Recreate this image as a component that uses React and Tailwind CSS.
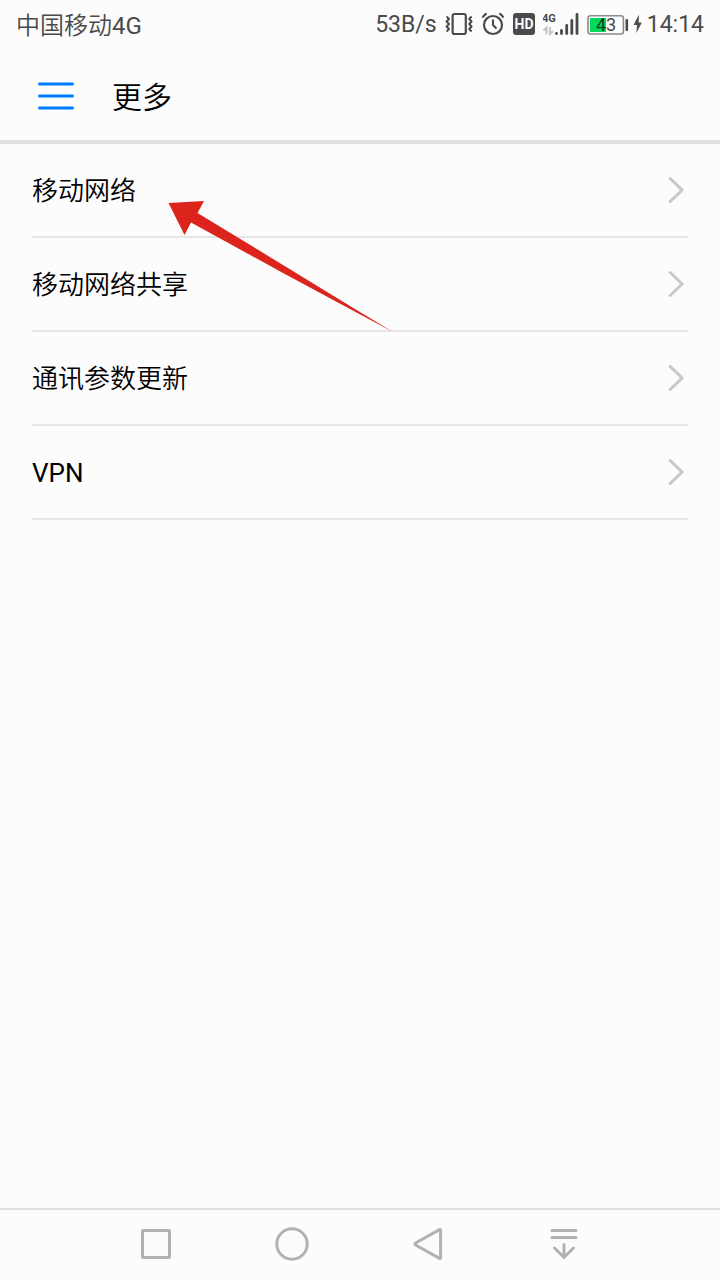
const menuItems = ['移动网络', '移动网络共享', '通讯参数更新', 'VPN'];

const VibrateIcon = () => (
  <svg width="28" height="24" viewBox="0 0 28 24" fill="none" stroke="#4a4a4a" strokeLinejoin="round" aria-hidden="true">
    <rect x="7.6" y="2" width="13.2" height="20" rx="2" strokeWidth="2.2" />
    <path d="M1.6 4.5 L4 7 L1.6 9.5 L4 12 L1.6 14.5 L4 17 L1.6 19.5" strokeWidth="2" />
    <path d="M26.6 4.5 L24.2 7 L26.6 9.5 L24.2 12 L26.6 14.5 L24.2 17 L26.6 19.5" strokeWidth="2" />
  </svg>
);

const AlarmIcon = () => (
  <svg width="24" height="24" viewBox="0 0 24 24" fill="none" stroke="#4a4a4a" strokeWidth="2.2" aria-hidden="true">
    <circle cx="12" cy="13" r="9" />
    <path d="M12 7.5 V13 L15.5 16.5" strokeWidth="2" />
    <path d="M1.6 5.6 Q2.8 3 5.6 1.6" />
    <path d="M22.4 5.6 Q21.2 3 18.4 1.6" />
  </svg>
);

const HdIcon = () => (
  <svg width="22" height="24" viewBox="0 0 22 24" aria-hidden="true">
    <rect x="0" y="1" width="22" height="22" rx="3" fill="#4a4a4a" />
    <text x="11" y="17" textAnchor="middle" fontSize="14" fontWeight="700" fill="#fcfcfc">HD</text>
  </svg>
);

const SignalIcon = () => (
  <svg width="36" height="24" viewBox="0 0 36 24" aria-hidden="true">
    <text x="-1" y="10" fontSize="11" fontWeight="700" fill="#4a4a4a">4G</text>
    <path d="M0.5 18.5 L3.6 15.5 V22.5 M7 15 V22 L10 19" fill="none" stroke="#c4c4c4" strokeWidth="2" />
    <g stroke="#4a4a4a" strokeWidth="2.8" strokeLinecap="round">
      <path d="M13.5 21.4 V21.6" />
      <path d="M18.5 18.4 V21.6" />
      <path d="M23.7 13.4 V21.6" />
      <path d="M28.8 8.4 V21.6" />
      <path d="M34 2.4 V21.6" />
    </g>
  </svg>
);

const BatteryIcon = () => (
  <svg width="42" height="24" viewBox="0 0 42 24" aria-hidden="true">
    <rect x="1" y="3.8" width="35.4" height="18.2" rx="2.5" fill="none" stroke="#8a8a8a" strokeWidth="1.6" />
    <rect x="3" y="6" width="16" height="14" fill="#00d95a" />
    <rect x="38.5" y="7" width="2.6" height="12" rx="1" fill="#4a4a4a" />
    <text y="19" fontSize="18">
      <tspan x="9" fill="#0c3d1d">4</tspan>
      <tspan x="19" fill="#4a4a4a">3</tspan>
    </text>
  </svg>
);

const BoltIcon = () => (
  <svg width="10" height="24" viewBox="0 0 10 24" fill="#4a4a4a" aria-hidden="true">
    <path d="M6 2.5 L0.6 13 H4 L3.4 21 L8.8 10.4 H5.6 Z" />
  </svg>
);

const StatusBar = () => (
  <div className="flex h-12 items-center justify-between px-4 text-[#4a4a4a]">
    <span className="pt-1 text-2xl">中国移动4G</span>
    <div className="flex items-center gap-2 text-[23px]">
      <span className="pt-[2px]">53B/s</span>
      <VibrateIcon />
      <AlarmIcon />
      <HdIcon />
      <SignalIcon />
      <div className="flex items-center gap-1">
        <BatteryIcon />
        <BoltIcon />
        <span className="pt-[2px]">14:14</span>
      </div>
    </div>
  </div>
);

const Header = () => (
  <header className="flex h-24 items-center border-b-4 border-[#e0e0e0] pt-1 pr-4 pl-[38px]">
    <button type="button" aria-label="菜单" className="mr-[38px]">
      <svg width="36" height="30" viewBox="0 0 36 30" stroke="#007dff" strokeWidth="3" strokeLinecap="round">
        <path d="M1.5 3 H34.5 M1.5 15 H34.5 M1.5 27 H34.5" />
      </svg>
    </button>
    <h1 className="pt-[2px] text-[30px]">更多</h1>
  </header>
);

const MenuRow = ({ label }) => (
  <li className="border-b-2 border-[#e6e6e6]">
    <a href="#" className="flex h-[92px] items-center justify-between pr-1">
      <span className="pt-[3px] text-[26px]">{label}</span>
      <svg width="16" height="28" viewBox="0 0 16 28" fill="none" stroke="#c8c8c8" strokeWidth="3" strokeLinecap="round" aria-hidden="true">
        <path d="M2.2 2.5 L14 14 L2.2 25.5" />
      </svg>
    </a>
  </li>
);

const NavBar = () => (
  <nav className="flex h-[72px] justify-center border-t-2 border-[#e0e0e0] pb-[2px]">
    <button type="button" aria-label="最近任务" className="flex w-[136px] items-center justify-center">
      <svg width="36" height="36" viewBox="0 0 36 36" fill="none" stroke="#b2b2b2" strokeWidth="3" strokeLinejoin="round">
        <rect x="4.5" y="4.5" width="27" height="27" rx="0.5" />
      </svg>
    </button>
    <button type="button" aria-label="主页" className="flex w-[136px] items-center justify-center">
      <svg width="36" height="36" viewBox="0 0 36 36" fill="none" stroke="#b2b2b2" strokeWidth="3">
        <circle cx="18" cy="18" r="15.2" />
      </svg>
    </button>
    <button type="button" aria-label="返回" className="flex w-[136px] items-center justify-center">
      <svg width="36" height="36" viewBox="0 0 36 36" fill="none" stroke="#b2b2b2" strokeWidth="3" strokeLinejoin="round">
        <path d="M29.5 3.6 Q30.6 3 30.6 4.6 V31.4 Q30.6 33 29.5 32.4 L5.6 19 Q4.4 18 5.6 17 Z" />
      </svg>
    </button>
    <button type="button" aria-label="下拉通知" className="flex w-[136px] items-center justify-center">
      <svg width="36" height="36" viewBox="0 0 36 36" fill="none" stroke="#b2b2b2" strokeWidth="3" strokeLinecap="round">
        <path d="M6 4.5 H30 M6 11.5 H30" />
        <path d="M18 18.5 V31 M8.5 22 L18 31.5 L27.5 22" />
      </svg>
    </button>
  </nav>
);

const App = () => (
  <div className="flex min-h-screen flex-col bg-[#fcfcfc] font-['Roboto','Noto_Sans_CJK_SC_DemiLight','Noto_Sans_CJK_SC',sans-serif] text-black">
    <StatusBar />
    <Header />
    <main className="relative flex-1 px-8">
      <ul>
        {menuItems.map((label) => (
          <MenuRow key={label} label={label} />
        ))}
      </ul>
      {/* Pointer to the first entry */}
      <svg
        className="pointer-events-none absolute top-14 left-[168px]"
        width="226"
        height="134"
        viewBox="0 0 226 134"
        fill="#dc241c"
        aria-hidden="true"
      >
        <path d="M0.5 3 L36 1 L29.5 13 L115 65 L182 106 L225 132 L182 109 L115 73 L23 22.5 L16.5 35 Z" />
      </svg>
    </main>
    <NavBar />
  </div>
);

export default App;
